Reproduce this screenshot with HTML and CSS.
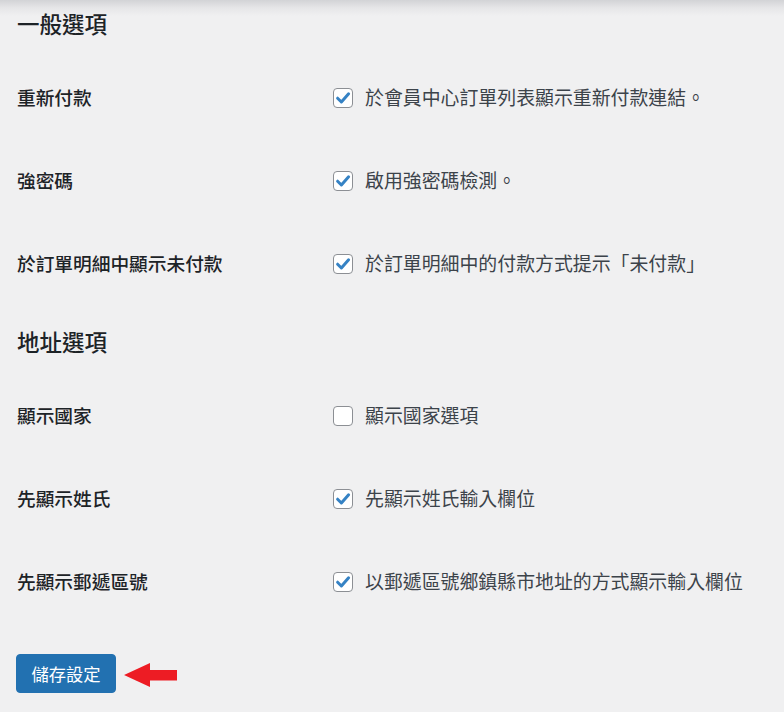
FILE: index.html
```html
<!DOCTYPE html>
<html lang="zh-Hant">
<head>
<meta charset="utf-8">
<title>設定</title>
<link rel="stylesheet" href="styles.css">
</head>
<body>
<div class="page">
  <h2 class="section-title first">一般選項</h2>
  <div class="row">
    <div class="label">重新付款</div>
    <div class="field"><span class="cb checked"><svg viewBox="0 0 20 20" width="20" height="20"><path d="M4.6 10.2 L8.4 14 L15.6 5.8" fill="none" stroke="#3582c4" stroke-width="3" stroke-linecap="round" stroke-linejoin="round"/></svg></span><span class="desc">於會員中心訂單列表顯示重新付款連結。</span></div>
  </div>
  <div class="row">
    <div class="label">強密碼</div>
    <div class="field"><span class="cb checked"><svg viewBox="0 0 20 20" width="20" height="20"><path d="M4.6 10.2 L8.4 14 L15.6 5.8" fill="none" stroke="#3582c4" stroke-width="3" stroke-linecap="round" stroke-linejoin="round"/></svg></span><span class="desc">啟用強密碼檢測。</span></div>
  </div>
  <div class="row">
    <div class="label">於訂單明細中顯示未付款</div>
    <div class="field"><span class="cb checked"><svg viewBox="0 0 20 20" width="20" height="20"><path d="M4.6 10.2 L8.4 14 L15.6 5.8" fill="none" stroke="#3582c4" stroke-width="3" stroke-linecap="round" stroke-linejoin="round"/></svg></span><span class="desc">於訂單明細中的付款方式提示「未付款」</span></div>
  </div>

  <h2 class="section-title">地址選項</h2>
  <div class="row">
    <div class="label">顯示國家</div>
    <div class="field"><span class="cb"></span><span class="desc">顯示國家選項</span></div>
  </div>
  <div class="row">
    <div class="label">先顯示姓氏</div>
    <div class="field"><span class="cb checked"><svg viewBox="0 0 20 20" width="20" height="20"><path d="M4.6 10.2 L8.4 14 L15.6 5.8" fill="none" stroke="#3582c4" stroke-width="3" stroke-linecap="round" stroke-linejoin="round"/></svg></span><span class="desc">先顯示姓氏輸入欄位</span></div>
  </div>
  <div class="row">
    <div class="label">先顯示郵遞區號</div>
    <div class="field"><span class="cb checked"><svg viewBox="0 0 20 20" width="20" height="20"><path d="M4.6 10.2 L8.4 14 L15.6 5.8" fill="none" stroke="#3582c4" stroke-width="3" stroke-linecap="round" stroke-linejoin="round"/></svg></span><span class="desc">以郵遞區號鄉鎮縣市地址的方式顯示輸入欄位</span></div>
  </div>

  <div class="actions">
    <button class="btn-primary" type="button">儲存設定</button>
    <span class="arrow"><svg viewBox="0 0 54 26" width="54" height="26"><polygon points="0,13 26,1 26,8 53,8 53,18.5 26,18.5 26,25" fill="#ed1c24"/></svg></span>
  </div>
</div>
</body>
</html>
```

FILE: styles.css
```css
html, body {
  margin: 0;
  padding: 0;
}
body {
  background: linear-gradient(to bottom, #d2d3d6 0px, #e6e6e8 8px, #f0f0f1 16px, #f0f0f1 100%);
  background-color: #f0f0f1;
  font-family: "Noto Sans CJK TC", "Noto Sans", sans-serif;
  color: #1d2327;
  width: 784px;
  height: 712px;
  overflow: hidden;
}
.page {
  padding-left: 17px;
}
.section-title {
  margin: 22px 0 17px 0;
  font-size: 22.5px;
  font-weight: 500;
  line-height: 30px;
  height: 30px;
  color: #1d2327;
}
.section-title.first {
  margin-top: 8px;
}
.row {
  display: flex;
  align-items: center;
  height: 83px;
}
.label {
  width: 316px;
  font-size: 18.7px;
  font-weight: 500;
  line-height: 24px;
  color: #1d2327;
}
.field {
  display: flex;
  align-items: center;
  gap: 12px;
}
.cb {
  box-sizing: border-box;
  width: 20px;
  height: 20px;
  border: 1px solid #8c8f94;
  border-radius: 4px;
  background: #fff;
  position: relative;
  flex: none;
  margin-top: 2px;
}
.cb svg {
  position: absolute;
  left: -1px;
  top: -1px;
}
.desc {
  font-size: 18.9px;
  line-height: 24px;
  color: #3c434a;
}
.actions {
  display: flex;
  align-items: center;
  margin-top: 32px;
  gap: 8px;
}
.btn-primary {
  margin-left: -1px;
  width: 100px;
  height: 39px;
  background: #2271b1;
  border: 1px solid #2271b1;
  border-radius: 4px;
  color: #fff;
  font-family: "Noto Sans CJK TC", "Noto Sans", sans-serif;
  font-size: 17.3px;
  padding: 0;
  line-height: 37px;
}
.arrow {
  display: flex;
  margin-top: 2px;
}
```
